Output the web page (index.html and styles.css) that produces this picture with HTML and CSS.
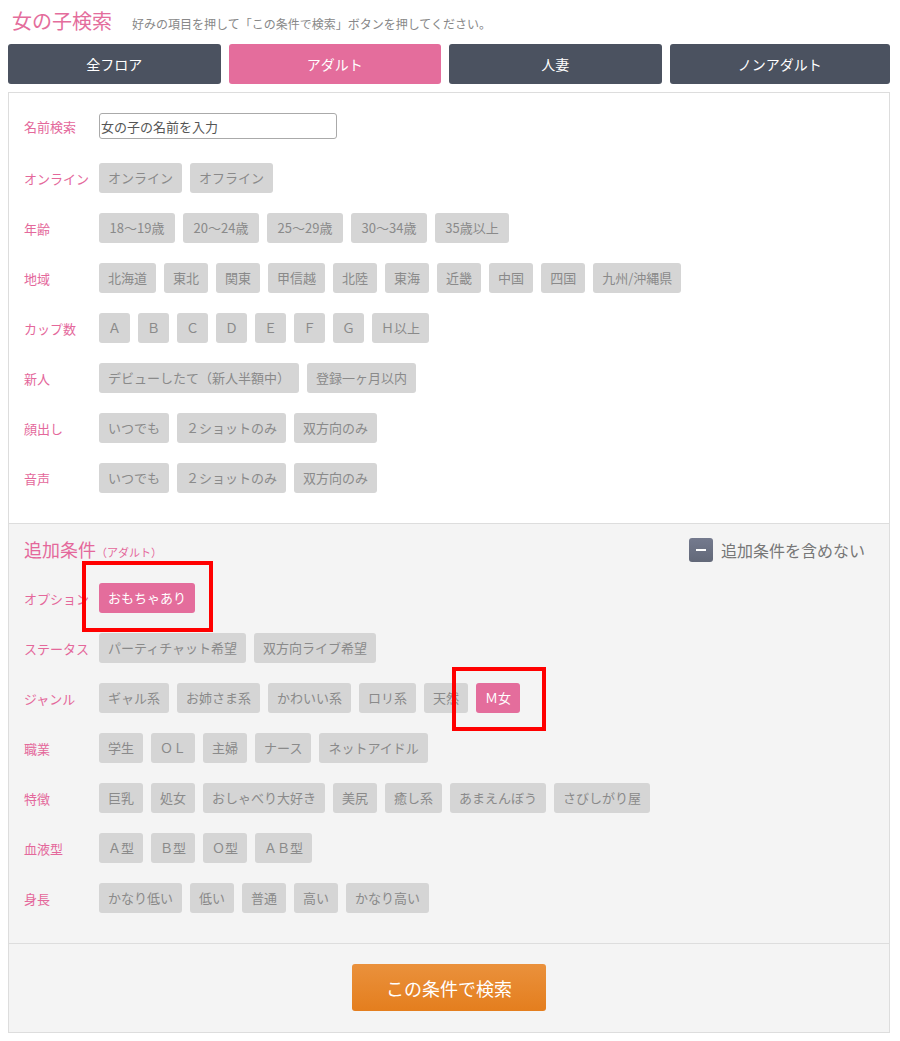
FILE: index.html
```html
<!DOCTYPE html>
<html lang="ja">
<head>
<meta charset="utf-8">
<title>女の子検索</title>
<link rel="stylesheet" href="styles.css">
</head>
<body>
<div class="page">
  <div class="header">
    <h1 class="title">女の子検索</h1>
    <p class="lead">好みの項目を押して「この条件で検索」ボタンを押してください。</p>
  </div>
  <div class="tabs">
    <a class="tab">全フロア</a>
    <a class="tab tab-active">アダルト</a>
    <a class="tab">人妻</a>
    <a class="tab">ノンアダルト</a>
  </div>
  <div class="box">
    <div class="section">
      <div class="row row-name">
        <div class="label">名前検索</div>
        <input class="name-input" type="text" placeholder="女の子の名前を入力">
      </div>
      <div class="row"><div class="label">オンライン</div><div class="opts"><span class="opt">オンライン</span><span class="opt">オフライン</span></div></div>
      <div class="row"><div class="label">年齢</div><div class="opts"><span class="opt opt-range">18〜19歳</span><span class="opt opt-range">20〜24歳</span><span class="opt opt-range">25〜29歳</span><span class="opt opt-range">30〜34歳</span><span class="opt opt-num">35歳以上</span></div></div>
      <div class="row"><div class="label">地域</div><div class="opts"><span class="opt">北海道</span><span class="opt">東北</span><span class="opt">関東</span><span class="opt">甲信越</span><span class="opt">北陸</span><span class="opt">東海</span><span class="opt">近畿</span><span class="opt">中国</span><span class="opt">四国</span><span class="opt">九州/沖縄県</span></div></div>
      <div class="row"><div class="label">カップ数</div><div class="opts"><span class="opt">Ａ</span><span class="opt">Ｂ</span><span class="opt">Ｃ</span><span class="opt">Ｄ</span><span class="opt">Ｅ</span><span class="opt">Ｆ</span><span class="opt">Ｇ</span><span class="opt">Ｈ以上</span></div></div>
      <div class="row"><div class="label">新人</div><div class="opts"><span class="opt">デビューしたて（新人半額中）</span><span class="opt">登録一ヶ月以内</span></div></div>
      <div class="row"><div class="label">顔出し</div><div class="opts"><span class="opt">いつでも</span><span class="opt">２ショットのみ</span><span class="opt">双方向のみ</span></div></div>
      <div class="row"><div class="label">音声</div><div class="opts"><span class="opt">いつでも</span><span class="opt">２ショットのみ</span><span class="opt">双方向のみ</span></div></div>
    </div>
    <div class="section section-gray">
      <div class="extra-head">
        <h2 class="extra-title">追加条件<span class="extra-sub">（アダルト）</span></h2>
        <div class="exclude"><span class="minus-box"><span class="minus"></span></span><span class="exclude-text">追加条件を含めない</span></div>
      </div>
      <div class="row"><div class="label">オプション</div><div class="opts"><span class="opt opt-on">おもちゃあり</span></div></div>
      <div class="row"><div class="label">ステータス</div><div class="opts"><span class="opt">パーティチャット希望</span><span class="opt">双方向ライブ希望</span></div></div>
      <div class="row"><div class="label">ジャンル</div><div class="opts"><span class="opt">ギャル系</span><span class="opt">お姉さま系</span><span class="opt">かわいい系</span><span class="opt">ロリ系</span><span class="opt">天然</span><span class="opt opt-on">Ｍ女</span></div></div>
      <div class="row"><div class="label">職業</div><div class="opts"><span class="opt">学生</span><span class="opt">ＯＬ</span><span class="opt">主婦</span><span class="opt">ナース</span><span class="opt">ネットアイドル</span></div></div>
      <div class="row"><div class="label">特徴</div><div class="opts"><span class="opt">巨乳</span><span class="opt">処女</span><span class="opt">おしゃべり大好き</span><span class="opt">美尻</span><span class="opt">癒し系</span><span class="opt">あまえんぼう</span><span class="opt">さびしがり屋</span></div></div>
      <div class="row"><div class="label">血液型</div><div class="opts"><span class="opt">Ａ型</span><span class="opt">Ｂ型</span><span class="opt">Ｏ型</span><span class="opt">ＡＢ型</span></div></div>
      <div class="row"><div class="label">身長</div><div class="opts"><span class="opt">かなり低い</span><span class="opt">低い</span><span class="opt">普通</span><span class="opt">高い</span><span class="opt">かなり高い</span></div></div>
    </div>
    <div class="section section-gray section-submit">
      <button class="submit" type="button">この条件で検索</button>
    </div>
  </div>
  <div class="mark mark-1"></div>
  <div class="mark mark-2"></div>
</div>
</body>
</html>
```
FILE: styles.css
```css
html, body {
  margin: 0;
  padding: 0;
  background: #fff;
}
body {
  font-family: "Noto Sans CJK JP", "Noto Sans", sans-serif;
  color: #666;
}
.page {
  position: relative;
  width: 882px;
  margin-left: 8px;
}
.header {
  display: flex;
  align-items: baseline;
  height: 44px;
  padding-left: 4px;
  box-sizing: border-box;
  padding-top: 6px;
}
.title {
  margin: 0;
  font-size: 20px;
  font-weight: normal;
  line-height: 30px;
  color: #e46d9c;
}
.lead {
  margin: 0 0 0 20px;
  font-size: 12px;
  color: #888;
}
.tabs {
  display: grid;
  grid-template-columns: 24.1% 24.1% 24.1% 1fr;
  gap: 8px;
  margin-bottom: 8px;
}
.tab {
  display: block;
  height: 40px;
  line-height: 40px;
  text-align: center;
  font-size: 14px;
  color: #fff;
  background: #4b5260;
  border-radius: 3px;
}
.tab-active {
  background: #e46d9c;
}
.box {
  border: 1px solid #ddd;
}
.section {
  padding: 20px 15px 20px;
  background: #fff;
}
.section-gray {
  background: #f4f4f4;
  border-top: 1px solid #ddd;
}
.row {
  display: flex;
  align-items: center;
  padding: 10px 0;
}
.row-name {
  padding: 0 0 14px;
}
.label {
  width: 75px;
  flex: none;
  font-size: 13px;
  color: #e4689b;
  white-space: nowrap;
}
.name-input {
  width: 238px;
  height: 26px;
  box-sizing: border-box;
  border: 1px solid #aaa;
  border-radius: 3px;
  padding: 0 1px;
  font-family: inherit;
  font-size: 13px;
  color: #555;
  background: #fff;
}
.name-input::placeholder {
  color: #555;
}
.opts {
  display: flex;
  gap: 8px;
}
.opt {
  display: block;
  height: 30px;
  line-height: 30px;
  padding: 0 9px;
  font-size: 13px;
  color: #8a8a8a;
  background: #d5d5d5;
  border-radius: 3px;
  white-space: nowrap;
  text-align: center;
  box-sizing: border-box;
}
.opt-range {
  width: 76px;
  padding: 0;
}
.opt-num {
  width: 74px;
  padding: 0;
}
.opt-on {
  background: #e46d9c;
  color: #fff;
}
.section-gray {
  padding-top: 14px;
}
.extra-head {
  display: flex;
  align-items: center;
  justify-content: space-between;
  height: 24px;
  margin-bottom: 11px;
}
.extra-title {
  margin: 0;
  font-size: 18px;
  font-weight: normal;
  color: #e4689b;
  line-height: 24px;
}
.extra-sub {
  font-size: 11px;
}
.exclude {
  display: flex;
  align-items: center;
  gap: 8px;
  margin-right: 9px;
}
.minus-box {
  display: flex;
  align-items: center;
  justify-content: center;
  width: 24px;
  height: 24px;
  border-radius: 3px;
  background: linear-gradient(#747a8e, #626878);
}
.minus {
  display: block;
  width: 10px;
  height: 2px;
  background: #fff;
}
.exclude-text {
  font-size: 16px;
  color: #777;
}
.section-submit {
  display: flex;
  justify-content: center;
  padding: 20px 0 21px;
}
.submit {
  width: 194px;
  height: 47px;
  border: none;
  border-radius: 3px;
  background: linear-gradient(#ea913c, #e47e1e);
  color: #fff;
  font-family: inherit;
  font-size: 18px;
}
.mark {
  position: absolute;
  border: 4px solid #f00;
  box-sizing: border-box;
}
.mark-1 {
  left: 74px;
  top: 561px;
  width: 131px;
  height: 71px;
}
.mark-2 {
  left: 444px;
  top: 667px;
  width: 94px;
  height: 64px;
}
```
